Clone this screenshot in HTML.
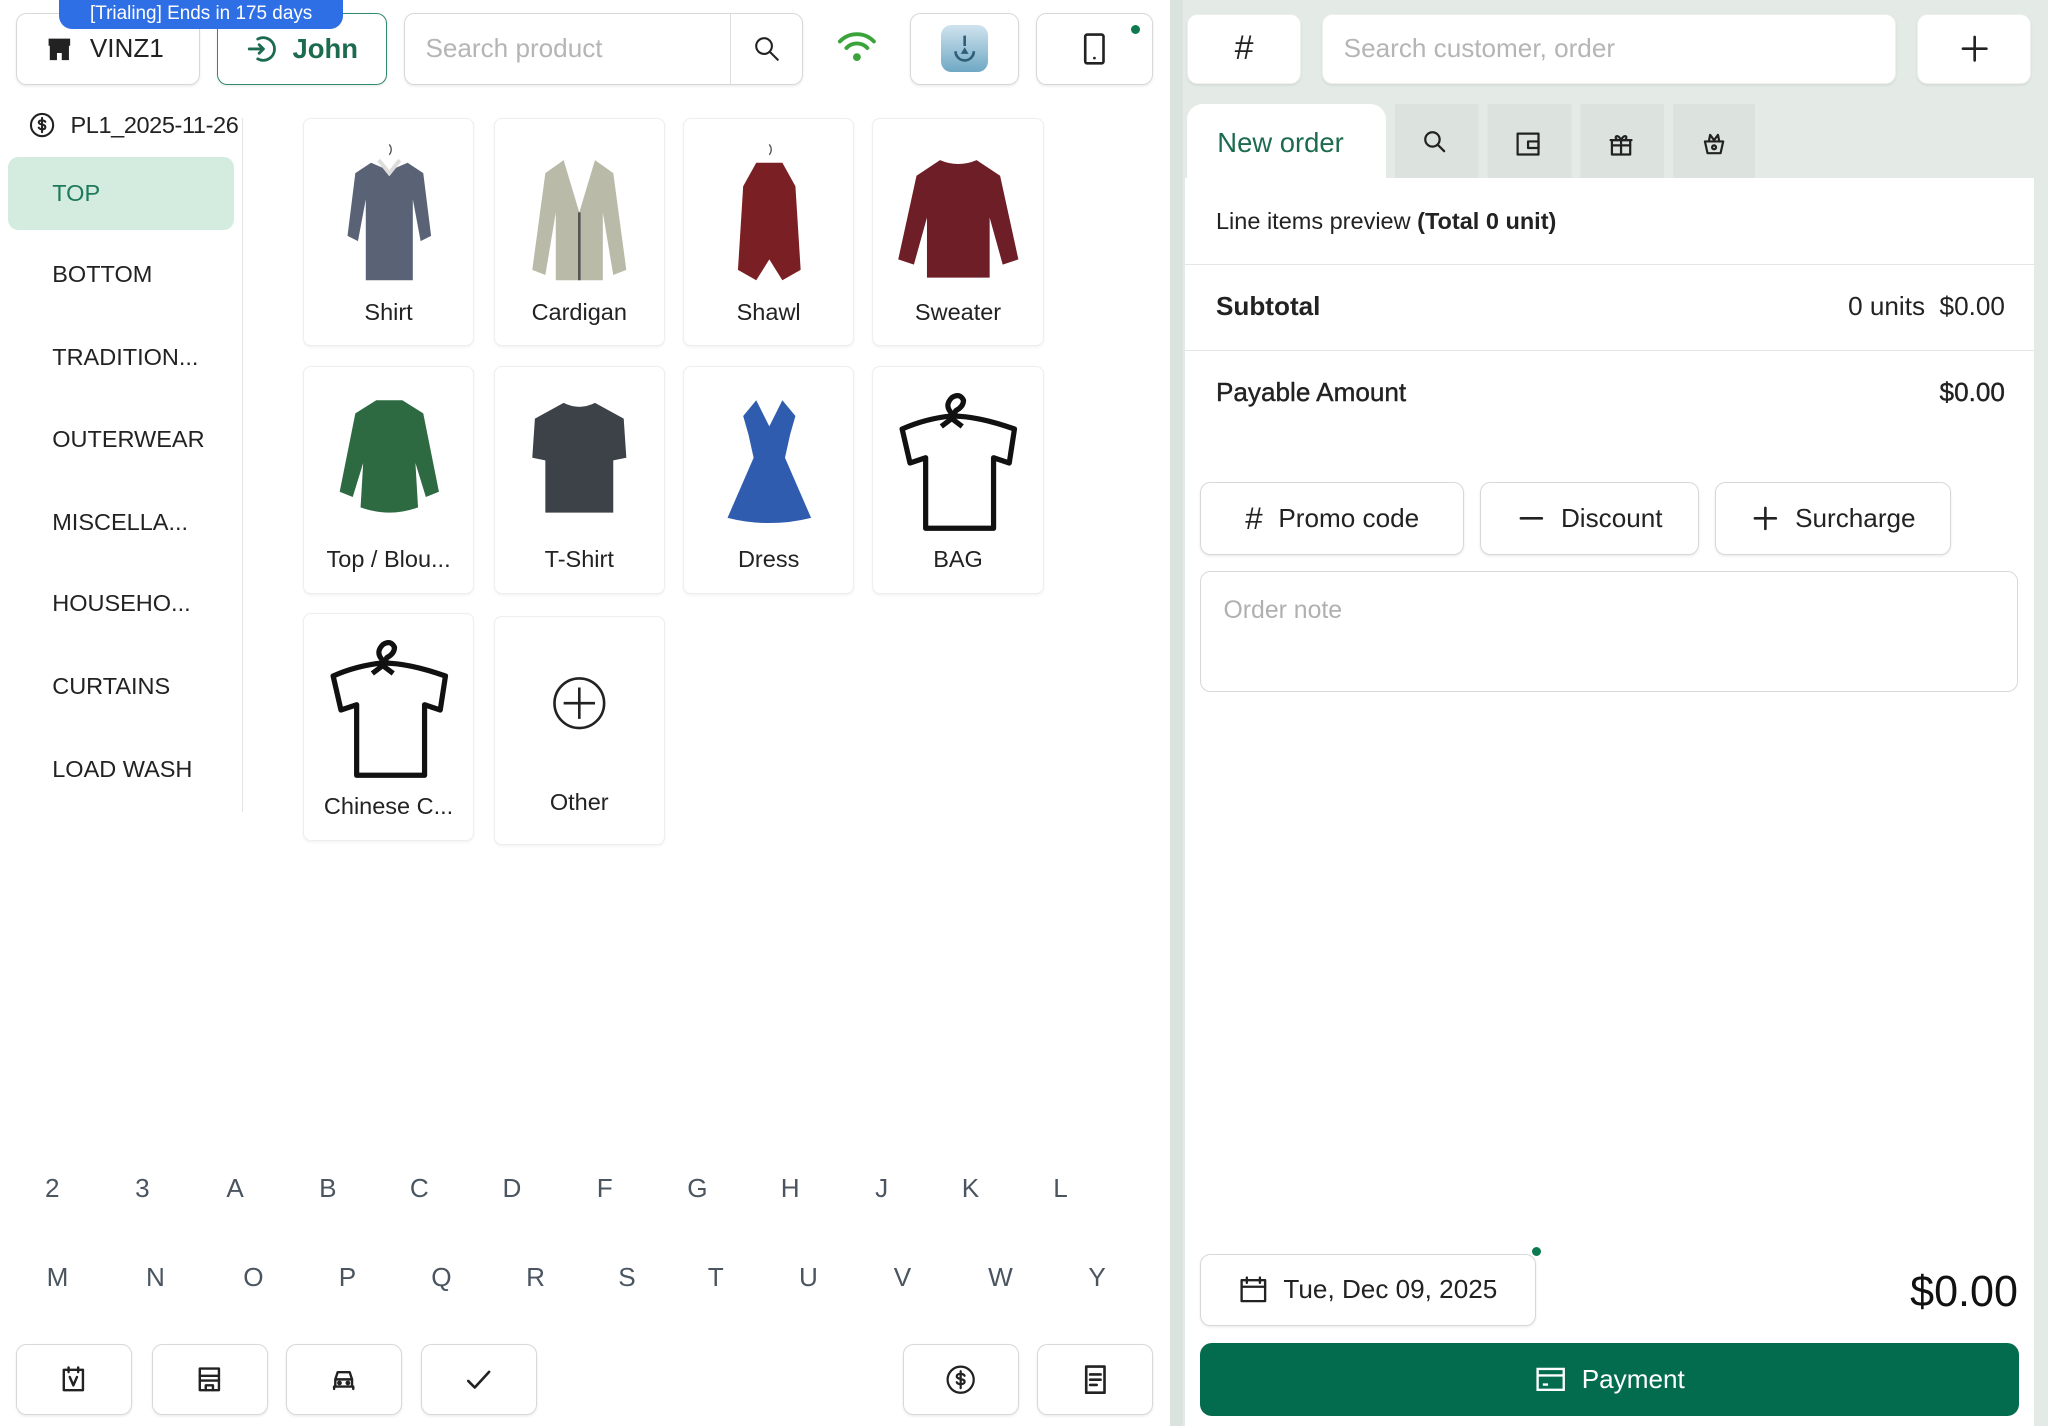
<!DOCTYPE html>
<html><head><meta charset="utf-8"><style>
*{box-sizing:border-box;margin:0;padding:0}
html,body{width:2048px;height:1426px;overflow:hidden;background:#fff}
#w{zoom:1.30612;width:1568px;height:1092px;position:relative;font-family:"Liberation Sans",sans-serif;color:#222}
.a{position:absolute}
.btn{position:absolute;background:#fff;border:1px solid #d6d9d7;border-radius:8px;box-shadow:0 1px 2px rgba(0,0,0,.08);display:flex;align-items:center;justify-content:center}
.card{position:absolute;width:131px;height:175px;background:#fff;border:1px solid #eee;border-radius:6px;box-shadow:0 1px 2px rgba(0,0,0,.05)}
.card .lb{position:absolute;left:0;right:0;text-align:center;font-size:18px;color:#222}
.card svg{position:absolute;left:15px;top:12px}
.cat{position:absolute;left:40px;font-size:18px;color:#222}
.L{position:absolute;font-size:20px;color:#4a5560;transform:translateX(-50%)}
svg.i{fill:none;stroke:#222;stroke-width:2;stroke-linecap:round;stroke-linejoin:round}
</style></head><body><div id="w">

<div class="btn" style="left:12px;top:10px;width:141px;height:55px;font-size:20px;justify-content:flex-start;padding-left:22px">
<svg width="22" height="22" viewBox="0 0 24 24" style="margin-right:12px"><path d="M3 3h18v6H3z M4 9v12h6v-6h4v6h6V9" fill="#222"/></svg>VINZ1</div>
<div class="btn" style="left:166px;top:10px;width:130px;height:55px;border:1.5px solid #2e8a68;font-size:21px;font-weight:bold;color:#1d6b4f">
<svg class="i" width="26" height="26" viewBox="0 0 24 24" style="stroke:#1d6b4f;margin-right:10px"><path d="M9 5a8 8 0 1 1 0 14"/><path d="M3 12h10M10 9l3 3-3 3"/></svg>John</div>
<div class="a" style="left:45px;top:0;width:218px;height:22px;background:#2f6fe6;border-radius:0 0 10px 10px;color:#fff;font-size:14.5px;text-align:center;line-height:21px">[Trialing] Ends in 175 days</div>
<div class="btn" style="left:309px;top:10px;width:306px;height:55px;justify-content:flex-start">
<span style="padding-left:16px;width:249px;font-size:20px;color:#b5b5b5">Search product</span>
<div style="width:1px;height:53px;background:#ddd"></div>
<svg class="i" width="24" height="24" viewBox="0 0 24 24" style="margin-left:15px;stroke-width:1.6"><circle cx="10" cy="10" r="6"/><path d="M14.5 14.5l6 6"/></svg></div>
<svg class="a" style="left:640px;top:24px" width="32" height="26" viewBox="0 0 32 26"><g fill="none" stroke="#3aa33a" stroke-width="3" stroke-linecap="round"><path d="M3 8a18 18 0 0 1 26 0"/><path d="M8 13a11 11 0 0 1 16 0"/></g><circle cx="16" cy="20" r="3" fill="#3aa33a"/></svg>
<div class="btn" style="left:697px;top:10px;width:83px;height:55px"><div style="width:36px;height:36px;border-radius:8px;background:linear-gradient(#cfe3ee,#6fa8c4);display:flex;align-items:center;justify-content:center"><svg width="24" height="24" viewBox="0 0 24 24"><path d="M12 2v8M5 14a7 7 0 0 0 14 0" stroke="#2d5d78" stroke-width="2" fill="none"/><path d="M12 11l-3 5h6z" fill="#2d5d78"/></svg></div></div>
<div class="btn" style="left:793px;top:10px;width:90px;height:55px"><svg class="i" width="22" height="26" viewBox="0 0 22 26"><rect x="4" y="2" width="14" height="22" rx="1.5"/><path d="M11 20h0.1"/></svg></div>
<div class="a" style="left:866px;top:19px;width:7px;height:7px;border-radius:50%;background:#0d7a52"></div>

<svg class="a i" style="left:22px;top:86px;stroke-width:1.6" width="20" height="20" viewBox="0 0 20 20"><circle cx="10" cy="10" r="8.5"/><path d="M12.5 7.5c-1-1.5-5-1.5-5 .5s5 1 5 3.5-4 2-5 .5M10 4.5v11"/></svg>
<div class="a" style="left:54px;top:86px;font-size:18px;letter-spacing:-0.3px">PL1_2025-11-26</div>

<div class="a" style="left:6px;top:120px;width:173px;height:56px;background:#d3ecdf;border-radius:8px"></div>
<div class="cat" style="top:138px;color:#1e7a5a">TOP</div>
<div class="cat" style="top:200px">BOTTOM</div>
<div class="cat" style="top:263px">TRADITION...</div>
<div class="cat" style="top:326px">OUTERWEAR</div>
<div class="cat" style="top:390px">MISCELLA...</div>
<div class="cat" style="top:452px">HOUSEHO...</div>
<div class="cat" style="top:515px">CURTAINS</div>
<div class="cat" style="top:579px">LOAD WASH</div>
<div class="a" style="left:185px;top:90px;width:1px;height:532px;background:#e4e4e4"></div>

<div class="card" style="left:232px;top:90px"><svg width="100" height="120" viewBox="0 0 100 120"><path d="M36 22 L24 30 L18 78 L26 82 L32 50 L32 112 L68 112 L68 50 L74 82 L82 78 L76 30 L64 22 L50 28Z" fill="#5a6275"/><path d="M42 20 L50 30 L58 20" stroke="#ddd" stroke-width="3" fill="none"/><path d="M50 8 q3 4 0 8" stroke="#555" fill="none"/></svg><div class="lb" style="top:138px">Shirt</div></div>
<div class="card" style="left:378px;top:90px"><svg width="100" height="120" viewBox="0 0 100 120"><path d="M38 20 L24 30 L14 104 L24 108 L32 60 L32 112 L68 112 L68 60 L76 108 L86 104 L76 30 L62 20 L50 60Z" fill="#b9baa8"/><path d="M50 60 V112" stroke="#555" stroke-width="2"/></svg><div class="lb" style="top:138px">Cardigan</div></div>
<div class="card" style="left:523px;top:90px"><svg width="100" height="120" viewBox="0 0 100 120"><path d="M40 22 L30 40 L26 104 L40 112 L50 96 L60 112 L74 104 L70 40 L60 22Z" fill="#7a1f24"/><path d="M50 8 q3 4 0 8" stroke="#555" fill="none"/></svg><div class="lb" style="top:138px">Shawl</div></div>
<div class="card" style="left:668px;top:90px"><svg width="100" height="120" viewBox="0 0 100 120"><path d="M36 20 Q50 26 64 20 L82 32 L96 96 L84 100 L74 64 L74 110 L26 110 L26 64 L16 100 L4 96 L18 32Z" fill="#6e1e26"/></svg><div class="lb" style="top:138px">Sweater</div></div>

<div class="card" style="left:232px;top:280px"><svg width="100" height="120" viewBox="0 0 100 120"><path d="M40 14 L24 24 L12 84 L22 88 L30 62 L28 96 Q50 104 72 96 L70 62 L78 88 L88 84 L76 24 L60 14Z" fill="#2d6a42"/></svg><div class="lb" style="top:137px">Top / Blou...</div></div>
<div class="card" style="left:378px;top:280px"><svg width="100" height="120" viewBox="0 0 100 120"><path d="M38 16 Q50 22 62 16 L84 28 L86 58 L76 60 L76 100 L24 100 L24 60 L14 58 L16 28Z" fill="#3d4148"/></svg><div class="lb" style="top:137px">T-Shirt</div></div>
<div class="card" style="left:523px;top:280px"><svg width="100" height="120" viewBox="0 0 100 120"><path d="M40 14 L50 34 L60 14 L70 26 L66 40 L62 58 L82 104 Q50 112 18 104 L38 58 L34 40 L30 26Z" fill="#2f5cae"/></svg><div class="lb" style="top:137px">Dress</div></div>
<div class="card" style="left:668px;top:280px"><svg width="100" height="120" viewBox="0 0 100 120"><g fill="none" stroke="#111" stroke-width="4" stroke-linejoin="round"><path d="M50 26 Q30 28 12 36 L18 62 L30 58 L30 112 L82 112 L82 58 L94 62 L98 36 Q70 26 50 26Z" transform="translate(-5,0)"/><path d="M45 24 q-6-6 0-12 q6-4 9 2 q0 5-6 8 L45 30 M37 34 l8-6 8 6"/></g></svg><div class="lb" style="top:137px">BAG</div></div>

<div class="card" style="left:232px;top:469px"><svg width="100" height="120" viewBox="0 0 100 120"><g fill="none" stroke="#111" stroke-width="4" stroke-linejoin="round"><path d="M50 26 Q30 28 12 36 L18 62 L30 58 L30 112 L82 112 L82 58 L94 62 L98 36 Q70 26 50 26Z" transform="translate(-5,0)"/><path d="M45 24 q-6-6 0-12 q6-4 9 2 q0 5-6 8 L45 30 M37 34 l8-6 8 6"/></g></svg><div class="lb" style="top:137px">Chinese C...</div></div>
<div class="card" style="left:378px;top:472px"><svg width="100" height="120" viewBox="0 0 100 120" style="top:0"><g fill="none" stroke="#222" stroke-width="2"><circle cx="50" cy="66" r="19"/><path d="M50 54v24M38 66h24"/></g></svg><div class="lb" style="top:131px">Other</div></div>

<div class="L" style="left:40px;top:898px">2</div><div class="L" style="left:109px;top:898px">3</div><div class="L" style="left:180px;top:898px">A</div><div class="L" style="left:251px;top:898px">B</div><div class="L" style="left:321px;top:898px">C</div><div class="L" style="left:392px;top:898px">D</div><div class="L" style="left:463px;top:898px">F</div><div class="L" style="left:534px;top:898px">G</div><div class="L" style="left:605px;top:898px">H</div><div class="L" style="left:675px;top:898px">J</div><div class="L" style="left:743px;top:898px">K</div><div class="L" style="left:812px;top:898px">L</div>
<div class="L" style="left:44px;top:966px">M</div><div class="L" style="left:119px;top:966px">N</div><div class="L" style="left:194px;top:966px">O</div><div class="L" style="left:266px;top:966px">P</div><div class="L" style="left:338px;top:966px">Q</div><div class="L" style="left:410px;top:966px">R</div><div class="L" style="left:480px;top:966px">S</div><div class="L" style="left:548px;top:966px">T</div><div class="L" style="left:619px;top:966px">U</div><div class="L" style="left:691px;top:966px">V</div><div class="L" style="left:766px;top:966px">W</div><div class="L" style="left:840px;top:966px">Y</div>

<div class="btn" style="left:12px;top:1029px;width:89px;height:54px"><svg class="i" width="22" height="22" viewBox="0 0 24 24"><rect x="4" y="4" width="16" height="17"/><path d="M8 2v4M16 2v4M9 10l3 7 3-7"/></svg></div>
<div class="btn" style="left:116px;top:1029px;width:89px;height:54px"><svg class="i" width="22" height="22" viewBox="0 0 24 24"><rect x="4" y="3" width="16" height="18"/><path d="M4 9h16M4 13h16M9 21v-4h6v4"/></svg></div>
<div class="btn" style="left:219px;top:1029px;width:89px;height:54px"><svg class="i" width="24" height="22" viewBox="0 0 24 24"><path d="M5 12l2-6h10l2 6v6H5z M5 12h14M4 18v2M20 18v2"/><circle cx="8.5" cy="15" r="1"/><circle cx="15.5" cy="15" r="1"/></svg></div>
<div class="btn" style="left:322px;top:1029px;width:89px;height:54px"><svg class="i" width="24" height="24" viewBox="0 0 24 24"><path d="M4 13l5 5L20 6"/></svg></div>
<div class="btn" style="left:691px;top:1029px;width:89px;height:54px"><svg class="i" width="24" height="24" viewBox="0 0 24 24" style="stroke-width:1.7"><circle cx="12" cy="12" r="10"/><path d="M15 9c-1-2-6-2-6 .5s6 1.5 6 4-5 2.5-6 .5M12 5.5v13"/></svg></div>
<div class="btn" style="left:794px;top:1029px;width:89px;height:54px"><svg class="i" width="22" height="24" viewBox="0 0 22 24"><rect x="4" y="2" width="14" height="20"/><path d="M7 8h8M7 12h8M7 16h5"/></svg></div>

<div class="a" style="left:896px;top:0;width:672px;height:1092px;background:#e4ebe6"></div>
<div class="a" style="left:896px;top:0;width:10px;height:1092px;background:#dbe3de"></div>
<div class="btn" style="left:909px;top:11px;width:87px;height:53px;border-color:#eef0ee;font-size:26px">#</div>
<div class="btn" style="left:1012px;top:11px;width:440px;height:53px;border-color:#eef0ee;justify-content:flex-start;padding-left:16px;font-size:20px;color:#b5b5b5">Search customer, order</div>
<div class="btn" style="left:1468px;top:11px;width:87px;height:53px;border-color:#eef0ee"><svg class="i" width="24" height="24" viewBox="0 0 24 24"><path d="M12 3v18M3 12h18"/></svg></div>

<div class="a" style="left:1068px;top:80px;width:276px;height:56px;background:repeating-linear-gradient(90deg,#dce2de 0 64px,#e4ebe6 64px 71px)"></div>
<svg class="a i" style="left:1089px;top:99px;stroke-width:1.7" width="20" height="20" viewBox="0 0 20 20"><circle cx="8" cy="8" r="5.5"/><path d="M12 12l5 5"/></svg>
<svg class="a i" style="left:1160px;top:100px;stroke-width:1.7" width="20" height="20" viewBox="0 0 20 20"><rect x="2" y="2" width="16" height="16"/><path d="M10 8h8v5h-8z"/></svg>
<svg class="a i" style="left:1231px;top:100px;stroke-width:1.7" width="20" height="20" viewBox="0 0 20 20"><rect x="3" y="7" width="14" height="11"/><path d="M2 7h16M10 7v11M3 11h14M10 7c-2-5-6-3-3 0M10 7c2-5 6-3 3 0"/></svg>
<svg class="a i" style="left:1302px;top:100px;stroke-width:1.7" width="20" height="20" viewBox="0 0 20 20"><path d="M3 8h14l-2 9H5z M6 8l1-5 3 4 3-4 1 5"/><circle cx="10" cy="12.5" r="1.5"/></svg>
<div class="a" style="left:909px;top:80px;width:152px;height:60px;background:#fff;border-radius:12px 12px 0 0;font-size:21px;color:#1d6b4f;padding:17px 0 0 23px">New order</div>

<div class="a" style="left:907px;top:136px;width:650px;height:956px;background:#fff"></div>
<div class="a" style="left:931px;top:159px;font-size:18px">Line items preview <b>(Total 0 unit)</b></div>
<div class="a" style="left:907px;top:202px;width:650px;height:1px;background:#e3e6e4"></div>
<div class="a" style="left:931px;top:223px;font-size:20px;font-weight:bold;color:#222">Subtotal</div>
<div class="a" style="right:33px;top:223px;font-size:20px;color:#222">0 units&nbsp;&nbsp;$0.00</div>
<div class="a" style="left:907px;top:268px;width:650px;height:1px;background:#e3e6e4"></div>
<div class="a" style="left:931px;top:289px;font-size:20px;color:#222;-webkit-text-stroke:0.3px #222">Payable Amount</div>
<div class="a" style="right:33px;top:289px;font-size:20px;color:#222;-webkit-text-stroke:0.3px #222">$0.00</div>

<div class="btn" style="left:919px;top:369px;width:202px;height:56px;font-size:20px"><span style="font-size:24px;margin-right:12px">#</span>Promo code</div>
<div class="btn" style="left:1133px;top:369px;width:168px;height:56px;font-size:20px"><svg class="i" width="22" height="22" viewBox="0 0 22 22" style="margin-right:12px"><path d="M3 11h16"/></svg>Discount</div>
<div class="btn" style="left:1313px;top:369px;width:181px;height:56px;font-size:20px"><svg class="i" width="22" height="22" viewBox="0 0 22 22" style="margin-right:12px"><path d="M3 11h16M11 3v16"/></svg>Surcharge</div>
<div class="a" style="left:919px;top:437px;width:626px;height:93px;border:1px solid #d6d9d7;border-radius:8px;font-size:19px;color:#b0b0b0;padding:19px 0 0 17px">Order note</div>

<div class="btn" style="left:919px;top:960px;width:257px;height:55px;font-size:20px"><svg class="i" width="22" height="22" viewBox="0 0 22 22" style="margin-right:12px;stroke-width:1.8"><rect x="2" y="4" width="18" height="16"/><path d="M2 9h18M6 2v4M16 2v4"/></svg>Tue, Dec 09, 2025</div>
<div class="a" style="left:1173px;top:955px;width:7px;height:7px;border-radius:50%;background:#0d7a52"></div>
<div class="a" style="right:23px;top:971px;font-size:33px;color:#111">$0.00</div>
<div class="a" style="left:919px;top:1028px;width:627px;height:56px;background:#046c4e;border-radius:9px;display:flex;align-items:center;justify-content:center;color:#fff;font-size:20px"><svg width="24" height="22" viewBox="0 0 24 22" style="margin-right:12px" fill="none" stroke="#fff" stroke-width="1.8"><rect x="2" y="3" width="20" height="16"/><path d="M2 8h20M6 15h4"/></svg>Payment</div>

</div></body></html>
